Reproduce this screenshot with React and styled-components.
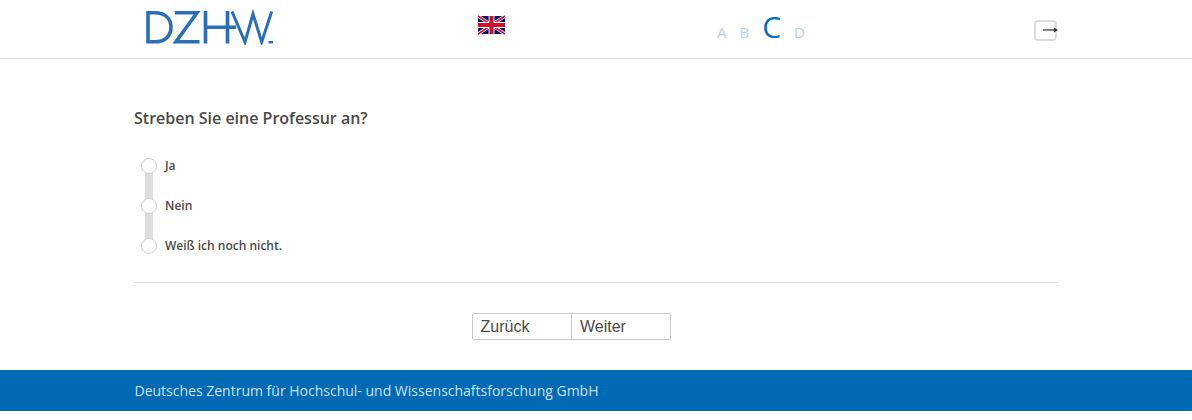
import React from 'react';
import styled, { createGlobalStyle } from 'styled-components';

const GlobalStyle = createGlobalStyle`
    html, body {
        margin: 0;
        padding: 0;
        background: #fff;
        font-family: "Open Sans", "Liberation Sans", sans-serif;
        color: #4a4a49;
    }
`;

const Header = styled.header`
    height: 58px;
    border-bottom: 1px solid #dcdcdc;
`;

const HeaderInner = styled.div`
    width: 924px;
    height: 58px;
    margin: 0 auto;
    display: grid;
    grid-template-columns: 344px 238px 1fr auto;
`;

const Logo = styled.svg`
    display: block;
    width: 140px;
    height: 36px;
    margin: 9px 0 0 10px;
`;

const Flag = styled.svg`
    display: block;
    width: 27px;
    height: 20px;
    margin-top: 15px;
`;

const Steps = styled.div`
    display: flex;
    align-items: baseline;
    gap: 13px;
    height: 38px;
    margin-top: -2px;
    padding-left: 1px;
`;

const Step = styled.span`
    font-size: ${p => (p.$active ? '30px' : '15px')};
    line-height: 58px;
    color: ${p => (p.$active ? '#0070bf' : '#b2d2ea')};
`;

const Logout = styled.button`
    position: relative;
    box-sizing: border-box;
    width: 23px;
    height: 21px;
    margin: 20px 1px 0 0;
    padding: 0;
    background: #fff;
    border: 2px solid #dcdcdc;
    border-radius: 4px;
`;

const LogoutArrow = styled.svg`
    position: absolute;
    left: 7px;
    top: 3px;
    width: 16px;
    height: 10px;
`;

const Main = styled.main`
    width: 924px;
    margin: 0 auto;
`;

const Question = styled.h1`
    margin: 0;
    padding-top: 48px;
    font-size: 16px;
    line-height: 22px;
    font-weight: 600;
    color: #4a4a49;
`;

const Options = styled.ul`
    position: relative;
    list-style: none;
    margin: 16px 0 0;
    padding: 0 0 0 7px;

    &::before {
        content: "";
        position: absolute;
        left: 11px;
        top: 21px;
        width: 8px;
        height: 80px;
        background: #dedede;
    }
`;

const Option = styled.li`
    position: relative;
    display: flex;
    align-items: center;
    gap: 8px;
    height: 40px;
    font-size: 12px;
    font-weight: 600;
    color: #4a4a49;
`;

const Radio = styled.span`
    box-sizing: border-box;
    width: 16px;
    height: 16px;
    margin-top: 2px;
    background: #fff;
    border: 1px solid #cfcfcf;
    border-radius: 50%;
`;

const Divider = styled.hr`
    margin: 17px 0 0;
    border: 0;
    border-top: 1px solid #dcdcdc;
`;

const Buttons = styled.div`
    display: flex;
    margin: 30px 0 30px 338px;
`;

const NavButton = styled.button`
    box-sizing: border-box;
    width: ${p => (p.$first ? '100px' : '99px')};
    height: 27px;
    padding: 0 0 0 ${p => (p.$first ? '7.5px' : '8px')};
    text-align: left;
    background: #fff;
    border: 1px solid #c8c8c8;
    border-left-width: ${p => (p.$first ? '1px' : '0')};
    border-radius: ${p => (p.$first ? '2px 0 0 2px' : '0 2px 2px 0')};
    font-family: "Liberation Sans", Arial, sans-serif;
    font-size: 16px;
    color: #4a4a49;
`;

const Footer = styled.footer`
    height: 41px;
    background: #0069b4;
`;

const FooterInner = styled.div`
    width: 924px;
    margin: 0 auto;
    padding-left: 1px;
    font-size: 14px;
    line-height: 41px;
    color: #cfe2f0;
`;

const LOGO_BLUE = '#2a6ebb';

const App = () => (
    <>
        <GlobalStyle />
        <Header>
            <HeaderInner>
                <Logo viewBox="0 0 140 36" fill="none" stroke={LOGO_BLUE} strokeWidth="3.6">
                    <path d="M4 3.8V32.8H11C21 32.8 27 27 27 18.3S21 3.8 11 3.8Z" />
                    <path d="M31 3.8H53L32 32.8H55.5" />
                    <path d="M61.5 2V34.5M83.5 2V34.5M61.5 18.3H92" />
                    <path d="M88 2.5L101 33L109 5L117.7 33L127.7 2.5" strokeWidth="3" />
                    <path d="M124.5 33.2H129" strokeWidth="2.5" />
                </Logo>
                <Flag viewBox="0 0 60 40">
                    <rect width="60" height="40" fill="#00126b" />
                    <path d="M0 0L60 40M60 0L0 40" stroke="#fff" strokeWidth="7" />
                    <path d="M0 0L60 40M60 0L0 40" stroke="#d0102a" strokeWidth="4" />
                    <path d="M30 0V40M0 20H60" stroke="#fff" strokeWidth="13" />
                    <path d="M30 0V40M0 20H60" stroke="#d0102a" strokeWidth="9" />
                </Flag>
                <Steps>
                    <Step>A</Step>
                    <Step>B</Step>
                    <Step $active>C</Step>
                    <Step>D</Step>
                </Steps>
                <Logout aria-label="Abmelden">
                    <LogoutArrow viewBox="0 0 16 10">
                        <path d="M0 5H12" stroke="#333" strokeWidth="1.2" />
                        <path d="M11 2.5L15 5L11 7.5Z" fill="#333" />
                    </LogoutArrow>
                </Logout>
            </HeaderInner>
        </Header>
        <Main>
            <Question>Streben Sie eine Professur an?</Question>
            <Options>
                <Option><Radio />Ja</Option>
                <Option><Radio />Nein</Option>
                <Option><Radio />Weiß ich noch nicht.</Option>
            </Options>
            <Divider />
            <Buttons>
                <NavButton $first>Zurück</NavButton>
                <NavButton>Weiter</NavButton>
            </Buttons>
        </Main>
        <Footer>
            <FooterInner>Deutsches Zentrum für Hochschul- und Wissenschaftsforschung GmbH</FooterInner>
        </Footer>
    </>
);

export default App;
